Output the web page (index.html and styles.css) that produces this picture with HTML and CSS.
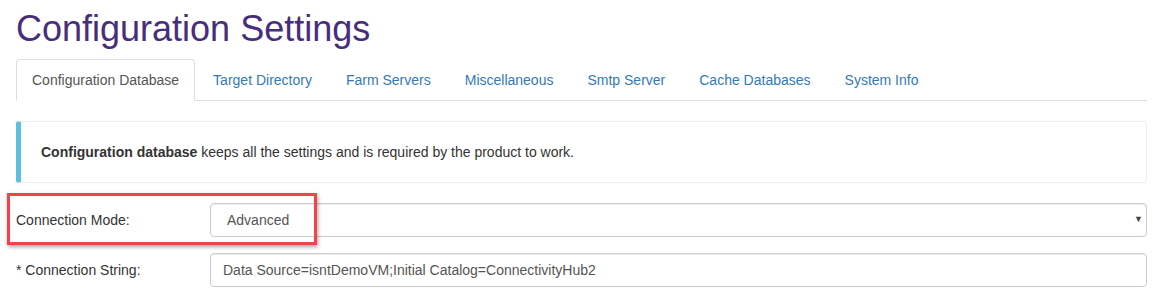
FILE: index.html
```html
<!DOCTYPE html>
<html lang="en">
<head>
    <meta charset="UTF-8" />
    <meta name="viewport" content="width=device-width, initial-scale=1.0" />
    <title>Configuration Settings</title>
    <link rel="stylesheet" href="styles.css">
</head>
<body>
<div class="container">
    <h1>Configuration Settings</h1>

    <ul class="nav-tabs">
        <li class="active"><a href="#">Configuration Database</a></li>
        <li><a href="#">Target Directory</a></li>
        <li><a href="#">Farm Servers</a></li>
        <li><a href="#">Miscellaneous</a></li>
        <li><a href="#">Smtp Server</a></li>
        <li><a href="#">Cache Databases</a></li>
        <li><a href="#">System Info</a></li>
    </ul>

    <div class="tab-content">
        <div class="callout">
            <b>Configuration database</b> keeps all the settings and is required by the product to work.
        </div>

        <div class="form-row highlighted">
            <label>Connection Mode:</label>
            <div class="select-wrap">
                <select class="form-control">
                    <option>Advanced</option>
                    <option>Basic</option>
                </select>
                <span class="caret">&#9660;</span>
            </div>
            <span class="marker"></span>
        </div>

        <div class="form-row">
            <label>* Connection String:</label>
            <input class="form-control" type="text" value="Data Source=isntDemoVM;Initial Catalog=ConnectivityHub2">
        </div>
    </div>
</div>
</body>
</html>
```

FILE: styles.css
```css
body {
    margin: 0;
    padding: 0;
    font-family: "Liberation Sans", Arial, sans-serif;
    font-size: 14px;
    line-height: 20px;
    color: #333;
    background-color: #fff;
}

.container {
    padding: 0 6px 0 16px;
}

h1 {
    margin: 9px 0 10px;
    font-size: 36px;
    font-weight: normal;
    line-height: 40px;
    color: #472e7c;
}

.nav-tabs {
    display: flex;
    margin: 0;
    padding: 0;
    list-style: none;
    border-bottom: 1px solid #ddd;
}

.nav-tabs li {
    margin: 0 2px -1px 0;
}

.nav-tabs a {
    display: block;
    padding: 10px 15px;
    border: 1px solid transparent;
    border-radius: 4px 4px 0 0;
    color: #337ab7;
    text-decoration: none;
}

.nav-tabs li.active a {
    color: #555;
    background-color: #fff;
    border-color: #ddd #ddd transparent;
}

.callout {
    margin: 20px 0;
    padding: 20px;
    border: 1px solid #eee;
    border-left: 5px solid #5bc0de;
    border-radius: 3px;
}

.form-row {
    position: relative;
    display: grid;
    grid-template-columns: 194px 1fr;
    align-items: center;
    margin-bottom: 16px;
}

.form-control {
    box-sizing: border-box;
    width: 100%;
    height: 34px;
    margin: 0;
    padding: 6px 12px;
    font-family: inherit;
    font-size: 14px;
    color: #555;
    background-color: #fff;
    border: 1px solid #ccc;
    border-radius: 4px;
    box-shadow: inset 0 1px 1px rgba(0, 0, 0, 0.075);
}

.select-wrap {
    position: relative;
}

select.form-control {
    appearance: none;
    -webkit-appearance: none;
    padding-left: 16px;
}

.caret {
    position: absolute;
    right: 4px;
    top: 10px;
    font-size: 9px;
    line-height: 12px;
    color: #444;
    pointer-events: none;
}

.marker {
    position: absolute;
    left: -9px;
    top: -10px;
    width: 304px;
    height: 46px;
    border: 3px solid #f2434b;
    box-shadow: 1px 2px 4px rgba(0, 0, 0, 0.35);
    pointer-events: none;
}
```
